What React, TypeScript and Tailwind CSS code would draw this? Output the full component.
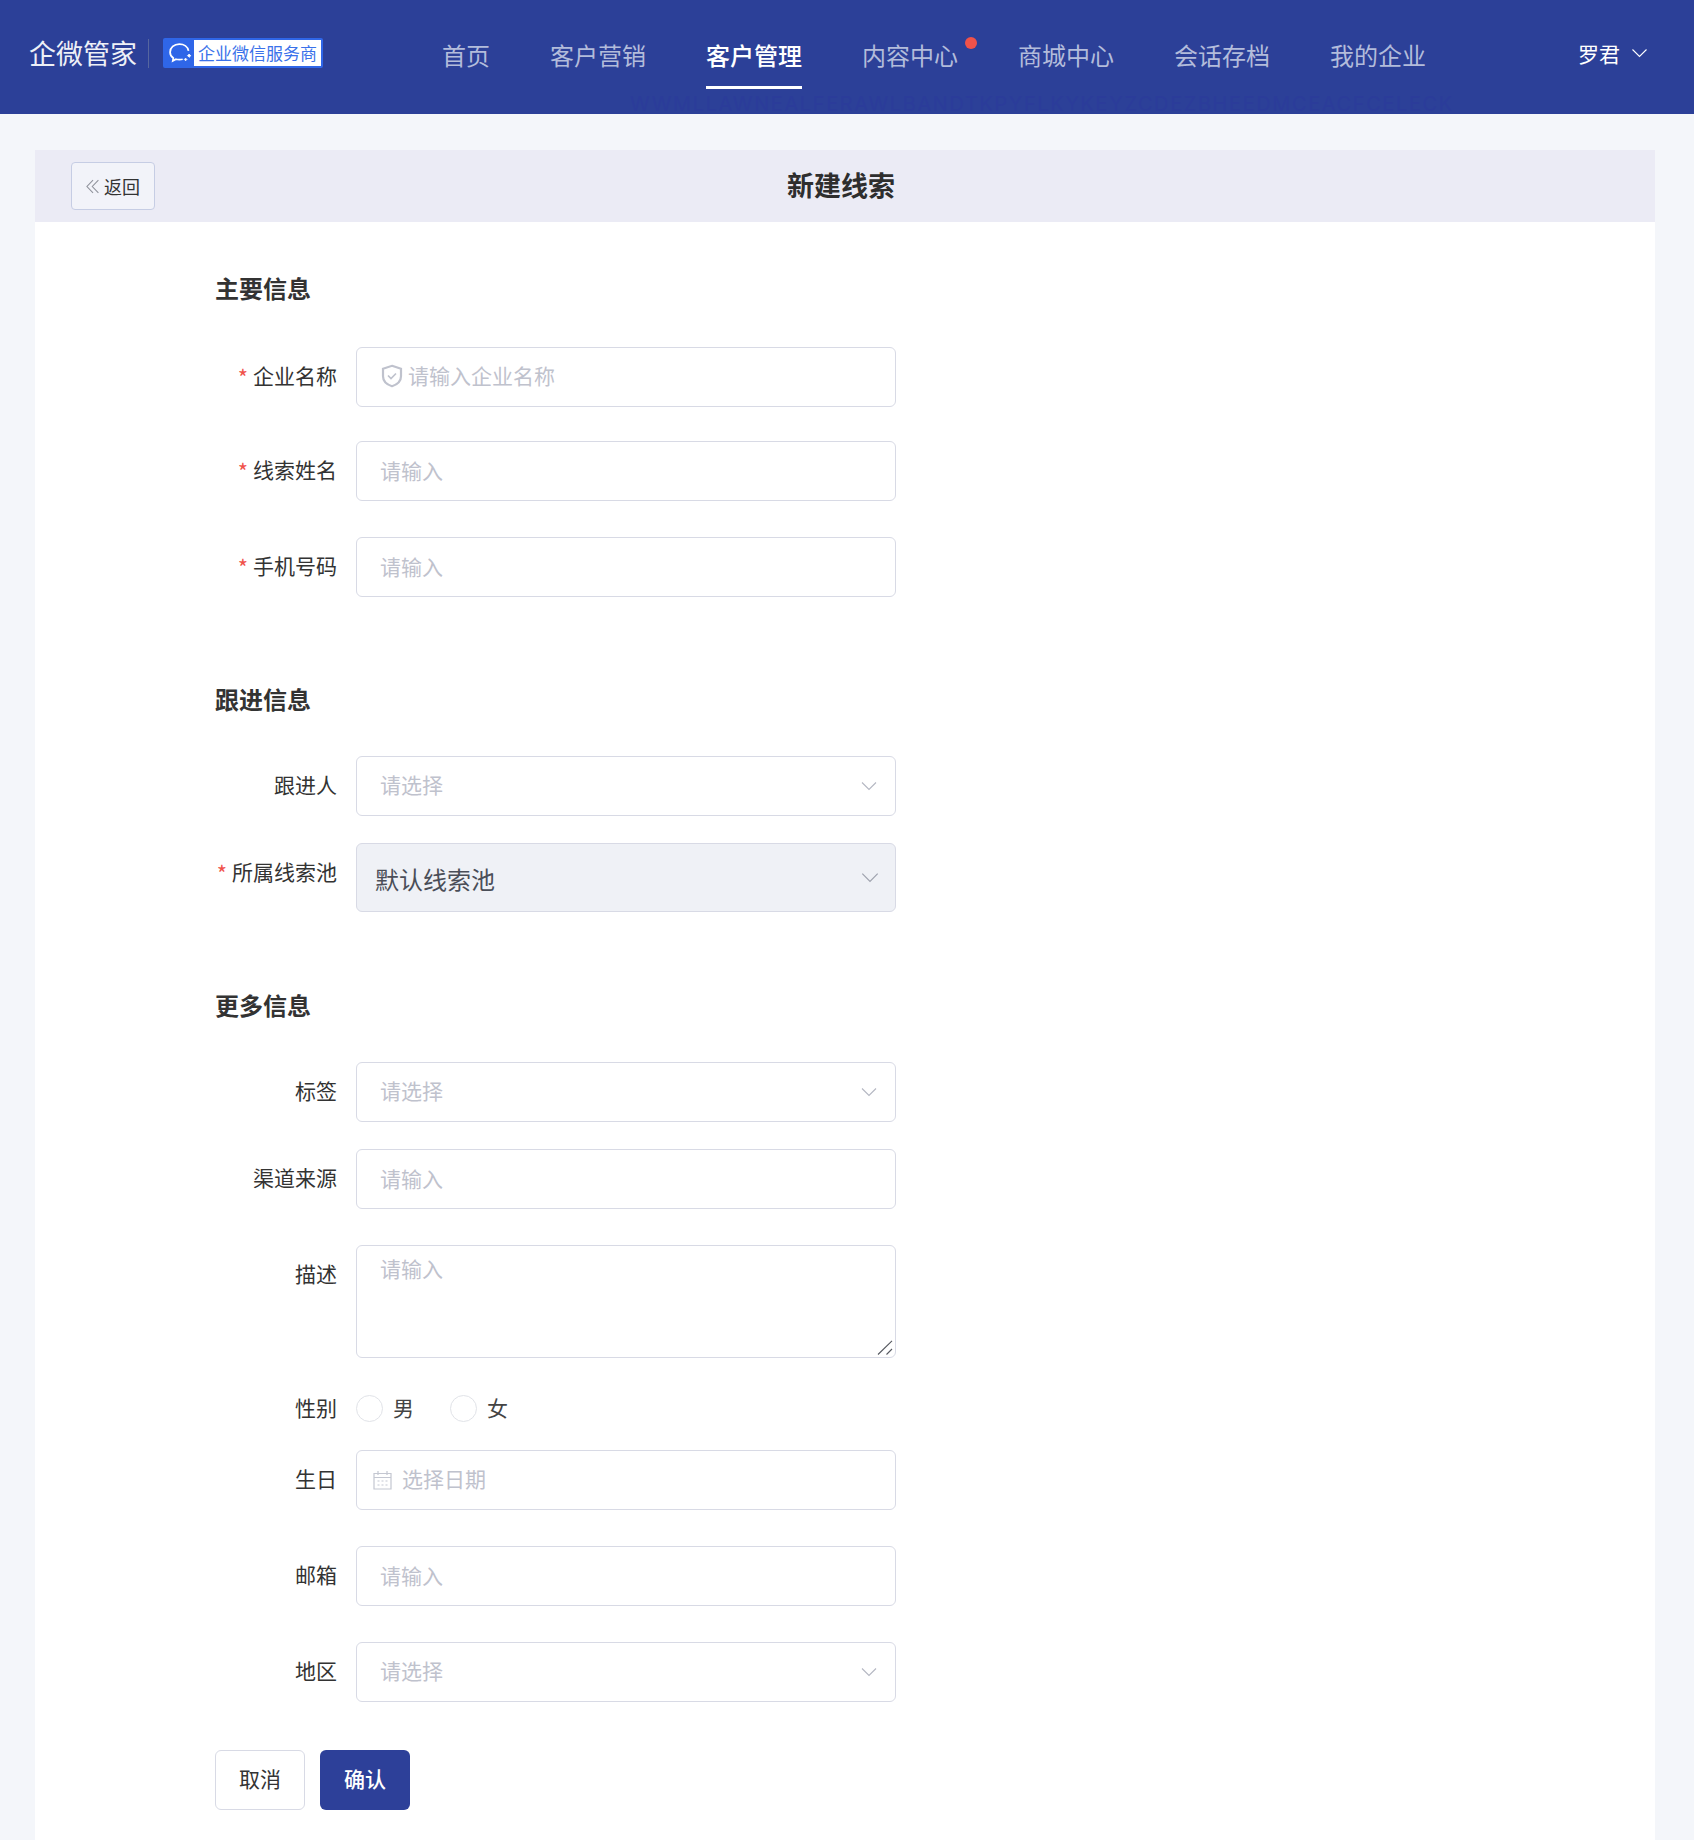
import React from "react";

const navItems = ["首页", "客户营销", "客户管理", "内容中心", "商城中心", "会话存档", "我的企业"];

function Chevron({ className }: { className: string }) {
  return (
    <svg className={className} viewBox="0 0 16 10" fill="none" stroke="currentColor" strokeWidth="1.1">
      <path d="M1 1.500 8 8.500 15 1.500" />
    </svg>
  );
}

function Label({ text, required, tall = true }: { text: string; required?: boolean; tall?: boolean }) {
  return (
    <div className={`mr-[19px] flex w-[122px] shrink-0 items-center justify-end text-[21px] text-[#333] ${tall ? "h-[60px] pb-[2px]" : "h-[28px]"}`}>
      {required && <span className="mr-[5px] text-[22px] leading-none text-[#f0524a]">*</span>}
      {text}
    </div>
  );
}

function TextField({ placeholder = "请输入" }: { placeholder?: string }) {
  return (
    <input
      placeholder={placeholder}
      className="h-[60px] w-[540px] rounded-[6px] border border-[#d8dae5] bg-white px-[23px] pb-[2px] text-[21px] outline-none placeholder:text-[#bfc2cd]"
    />
  );
}

function SelectField() {
  return (
    <div className="flex h-[60px] w-[540px] items-center justify-between rounded-[6px] border border-[#d8dae5] bg-white pl-[23px] pr-[18px] text-[21px] text-[#bfc2cd]">
      <span className="pb-[2px]">请选择</span>
      <Chevron className="h-[10px] w-[16px] text-[#b4b7c2]" />
    </div>
  );
}

function Section({ title, className, children }: { title: string; className: string; children: React.ReactNode }) {
  return (
    <section className={className}>
      <h2 className="h-[32px] text-[24px] font-semibold leading-[30px] text-[#333]">{title}</h2>
      {children}
    </section>
  );
}

function Radio({ text }: { text: string }) {
  return (
    <label className="flex items-center">
      <span className="h-[27px] w-[27px] rounded-full border border-[#e1e3e8] bg-white" />
      <span className="ml-[10px] pb-[2px] text-[21px] leading-[28px] text-[#444]">{text}</span>
    </label>
  );
}

export default function App() {
  return (
    <div className="flex min-h-[1840px] flex-col bg-[#f4f6fa] font-['Noto_Sans_CJK_SC',sans-serif]">
      <header className="relative flex h-[114px] shrink-0 items-center bg-[#2c4098] pl-[29px] pr-[46px]">
        <span className="absolute left-[630px] top-[94px] whitespace-nowrap font-['Inter',sans-serif] text-[20px] leading-[20px] tracking-[1.6px] text-[#2b3c9a]">
          WWMLLAWNEALFERAWLBANDTKPYFLKYKEYZCDEZBHEEDMCEACFCELECK
        </span>

        <div className="flex items-center pb-[8px]">
          <span className="w-[108px] whitespace-nowrap text-[27px] leading-[32px] text-[#eef0f7]">企微管家</span>
          <span className="ml-[11px] h-[29px] w-px bg-[#56669f]" />
          <div className="ml-[14px] flex h-[30px] w-[160px] items-center rounded-[2px] bg-[#2f66e8] pr-[2px]">
            <svg className="ml-[3px] h-[26px] w-[28px] shrink-0" viewBox="0 0 26 24" fill="none" stroke="#fff" strokeWidth="1.6">
              <path d="M15.500 17.800c-1 .3-2.100.4-3.100.4-1.100 0-2.100-.1-3.100-.4l-3 1.500.5-2.600c-1.900-1.300-3-3.300-3-5.500 0-4.200 3.700-7.400 8.600-7.400 4.400 0 7.800 2.600 8.500 6.200" />
              <path d="m20 14.500 1.500-1.500 1.500 1.500-1.500 1.500z" fill="#fff" strokeWidth="0.8" />
              <path d="m17 18 1.200-1.200 1.200 1.200-1.200 1.200z" fill="#fff" strokeWidth="0.8" />
            </svg>
            <span className="flex h-[26px] flex-1 items-center justify-center whitespace-nowrap bg-white pb-[2px] text-[17px] leading-none text-[#3a72ea]">
              企业微信服务商
            </span>
          </div>
        </div>

        <nav className="ml-[119px] flex h-full items-start gap-[60px]">
          {navItems.map((item) => (
            <div key={item} className="relative h-full">
              <div className={`h-[89px] whitespace-nowrap pt-[38px] text-[24px] leading-[34px] ${item === "客户管理" ? "border-b-[3px] border-white font-medium text-white" : "text-[#b3bcdb]"}`}>
                {item}
              </div>
              {item === "内容中心" && (
                <span className="absolute left-[103px] top-[37px] h-[12px] w-[12px] rounded-full bg-[#f0524a]" />
              )}
            </div>
          ))}
        </nav>

        <div className="ml-auto flex items-center pb-[8px] text-white">
          <span className="whitespace-nowrap text-[21px] leading-[28px]">罗君</span>
          <Chevron className="ml-[11px] h-[10px] w-[17px] text-white" />
        </div>
      </header>

      <main className="ml-[35px] mr-[39px] mt-[36px] flex flex-1 flex-col bg-white">
        <div className="flex h-[72px] items-center bg-[#ebebf5] pl-[36px] pr-[128px]">
          <button className="flex h-[48px] w-[84px] items-center justify-center rounded-[4px] border border-[#c6cde4] bg-[#f2f3f9] text-[18px] text-[#333]">
            <svg className="mr-[5px] h-[15px] w-[13px]" viewBox="0 0 12 14" fill="none" stroke="#8f929b" strokeWidth="1">
              <path d="M6.500 1 .8 7l5.700 6M11.500 1 5.800 7l5.700 6" />
            </svg>
            返回
          </button>
          <h1 className="flex-1 pb-[2px] text-center text-[27px] font-semibold leading-[34px] text-[#2e2e2e]">新建线索</h1>
        </div>

        <div className="pl-[180px] pt-[51px]">
          <Section title="主要信息" className="">
            <div className="mt-[42px] flex">
              <Label text="企业名称" required />
              <div className="relative">
                <TextField placeholder="" />
                <div className="absolute inset-y-0 left-[25px] flex items-center pb-[2px] text-[21px] text-[#bfc2cd]">
                  <svg className="mr-[5px] h-[24px] w-[22px]" viewBox="0 0 22 24" fill="none" stroke="#bfc2cd" strokeWidth="2.200">
                    <path d="M11 1.800 20 4.800v7.400c0 4.600-3.600 8.200-9 10-5.400-1.800-9-5.400-9-10V4.800z" />
                    <path d="m7 11.500 3 3 5-5" strokeWidth="1.700" />
                  </svg>
                  请输入企业名称
                </div>
              </div>
            </div>
            <div className="mt-[34px] flex">
              <Label text="线索姓名" required />
              <TextField />
            </div>
            <div className="mt-[36px] flex">
              <Label text="手机号码" required />
              <TextField />
            </div>
          </Section>

          <Section title="跟进信息" className="mt-[87px]">
            <div className="mt-[40px] flex">
              <Label text="跟进人" />
              <SelectField />
            </div>
            <div className="mt-[27px] flex">
              <Label text="所属线索池" required />
              <div className="flex h-[69px] w-[540px] items-center justify-between rounded-[6px] border border-[#d8dae5] bg-[#eff1f6] pl-[18px] pr-[16px]">
                <span className="pt-[3px] text-[24px] leading-[34px] text-[#4a4e58]">默认线索池</span>
                <Chevron className="h-[11px] w-[18px] text-[#9ea2ae]" />
              </div>
            </div>
          </Section>

          <Section title="更多信息" className="mt-[78px]">
            <div className="mt-[40px] flex">
              <Label text="标签" />
              <SelectField />
            </div>
            <div className="mt-[27px] flex">
              <Label text="渠道来源" />
              <TextField />
            </div>
            <div className="mt-[36px] flex">
              <Label text="描述" />
              <div className="relative h-[113px] w-[540px]">
                <textarea
                  placeholder="请输入"
                  className="h-full w-full resize-none rounded-[6px] border border-[#d8dae5] bg-white px-[23px] pt-[7px] text-[21px] leading-[30px] outline-none placeholder:text-[#bfc2cd]"
                />
                <svg className="absolute bottom-[3px] right-[3px] h-[15px] w-[16px]" viewBox="0 0 16 15" fill="none" stroke="#55585f" strokeWidth="1.100">
                  <path d="M1 14.500 15 .8M9.500 14.500l5.500-5.500" />
                </svg>
              </div>
            </div>
            <div className="mt-[35px] flex items-center">
              <Label text="性别" tall={false} />
              <div className="flex items-center gap-[36px]">
                <Radio text="男" />
                <Radio text="女" />
              </div>
            </div>
            <div className="mt-[27px] flex">
              <Label text="生日" />
              <div className="flex h-[60px] w-[540px] items-center rounded-[6px] border border-[#d8dae5] bg-white pl-[16px] text-[21px] text-[#bfc2cd]">
                <svg className="mr-[10px] h-[20px] w-[19px]" viewBox="0 0 19 20" fill="none" stroke="#c4c7d1" strokeWidth="1.200">
                  <path d="M1 3.500h17v15.500H1zM1 7.500h17M5 1v4M14 1v4" />
                  <path d="M4.500 11h2M8.500 11h2M12.500 11h2M4.500 15h2M8.500 15h2M12.500 15h2" />
                </svg>
                <span className="pb-[2px]">选择日期</span>
              </div>
            </div>
            <div className="mt-[36px] flex">
              <Label text="邮箱" />
              <TextField />
            </div>
            <div className="mt-[36px] flex">
              <Label text="地区" />
              <SelectField />
            </div>
          </Section>

          <div className="mt-[48px] flex gap-[15px] pb-[28px]">
            <button className="h-[60px] w-[90px] rounded-[6px] border border-[#d8dae5] bg-white pb-[2px] text-[21px] text-[#333]">取消</button>
            <button className="h-[60px] w-[90px] rounded-[6px] bg-[#2d4099] pb-[2px] text-[21px] font-medium text-white">确认</button>
          </div>
        </div>
      </main>
    </div>
  );
}
